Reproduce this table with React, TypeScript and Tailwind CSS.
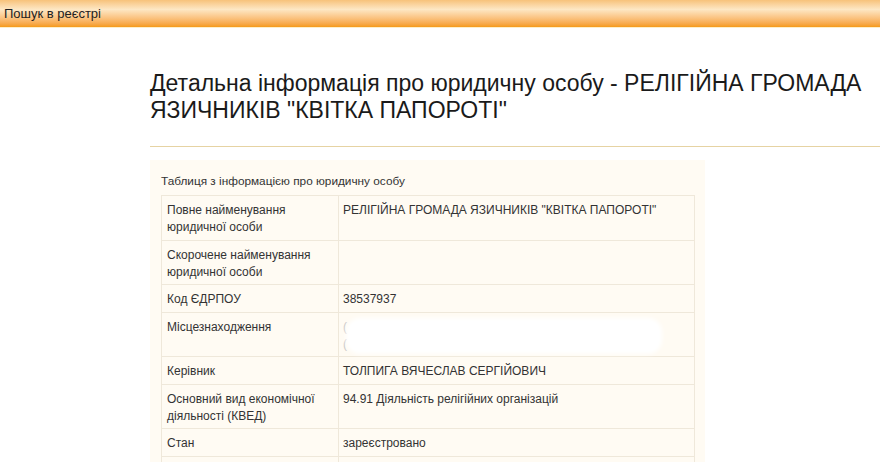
import React from "react";

const rows: { label: string; value: React.ReactNode }[] = [
  { label: "Повне найменування юридичної особи", value: 'РЕЛІГІЙНА ГРОМАДА ЯЗИЧНИКІВ "КВІТКА ПАПОРОТІ"' },
  { label: "Скорочене найменування юридичної особи", value: "" },
  { label: "Код ЄДРПОУ", value: "38537937" },
  {
    label: "Місцезнаходження",
    value: (
      <div className="relative">
        <div className="text-[#c8c8c8]">(</div>
        <div className="text-[#c8c8c8]">(</div>
        <div className="absolute left-[3px] top-[-1px] h-[36px] w-[316px] rounded-[14px] bg-white blur-[2px]" />
      </div>
    ),
  },
  { label: "Керівник", value: "ТОЛПИГА ВЯЧЕСЛАВ СЕРГІЙОВИЧ" },
  { label: "Основний вид економічної діяльності (КВЕД)", value: "94.91 Діяльність релігійних організацій" },
  { label: "Стан", value: "зареєстровано" },
];

export default function App() {
  return (
    <div className="min-h-screen bg-white font-['Liberation_Sans',Arial,sans-serif] text-[#333]">
      <div className="h-[28px] border-b border-[#fdeecb] bg-linear-to-b from-[#f7c27a] via-[#fde7c4] via-35% to-[#f59a14]">
        <div className="pl-[4px] text-[13px] leading-[27px] text-[#222]">Пошук в реєстрі</div>
      </div>
      <div className="pl-[150px] pt-[42px]">
        <h1 className="text-[23px] font-normal leading-[27px] text-[#1a1a1a]">
          Детальна інформація про юридичну особу - РЕЛІГІЙНА ГРОМАДА ЯЗИЧНИКІВ "КВІТКА ПАПОРОТІ"
        </h1>
        <div className="mt-[22px] border-t border-[#e6d3a3]" />
        <div className="mt-[13px] w-[555px] bg-[#fffbf3] pb-[20px] pl-[11px] pr-[10px] pt-[13px]">
          <div className="text-[11.8px] leading-[16px]">Таблиця з інформацією про юридичну особу</div>
          <table className="mt-[6px] w-[534px] border-collapse text-[12px] leading-[17px]">
            <tbody>
              {rows.map((r, i) => (
                <tr key={i}>
                  <td className="w-[177px] border border-[#efe8da] px-[5px] pb-[3.5px] pt-[6px] align-top">
                    <div className="w-[150px]">{r.label}</div>
                  </td>
                  <td className="border border-[#efe8da] px-[4px] pb-[3.5px] pt-[6px] align-top">{r.value}</td>
                </tr>
              ))}
              <tr>
                <td className="h-[45px] border border-[#efe8da]" />
                <td className="border border-[#efe8da]" />
              </tr>
            </tbody>
          </table>
        </div>
      </div>
    </div>
  );
}
